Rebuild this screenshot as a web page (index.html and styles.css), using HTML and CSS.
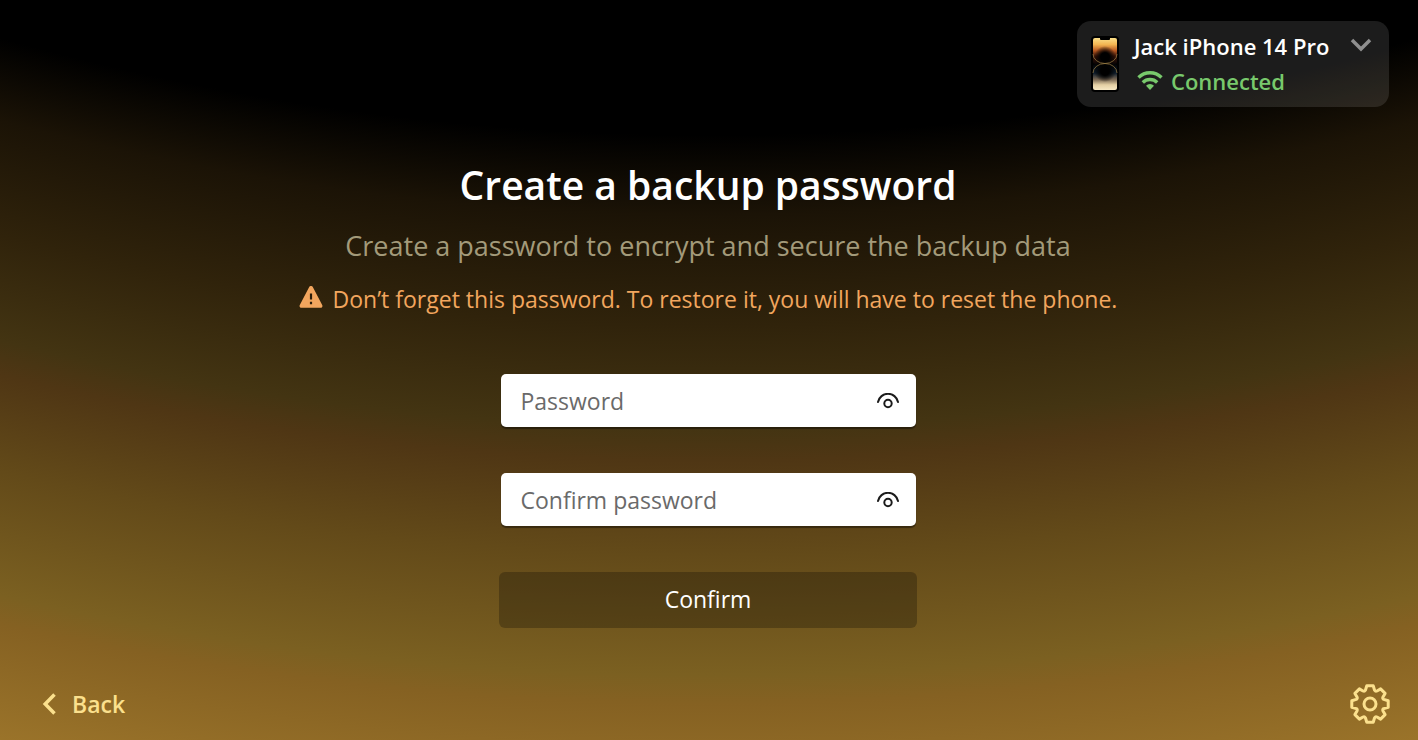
FILE: index.html
```html
<!DOCTYPE html>
<html lang="en">
<head>
  <meta charset="UTF-8" />
  <meta name="viewport" content="width=device-width, initial-scale=1.0" />
  <title>Create a backup password</title>
  <link rel="stylesheet" href="styles.css">
</head>
<body>
  <header>
    <button class="device" type="button">
      <svg class="phone" width="28" height="56" viewBox="0 0 28 56">
        <defs>
          <linearGradient id="wallTop" x1="0" y1="0" x2="0" y2="1">
            <stop offset="0" stop-color="#fbe08a" />
            <stop offset="0.25" stop-color="#f3b552" />
            <stop offset="0.48" stop-color="#b95a22" />
            <stop offset="0.7" stop-color="#3c1408" />
            <stop offset="1" stop-color="#0a0505" />
          </linearGradient>
          <linearGradient id="wallBottom" x1="0" y1="0" x2="0" y2="1">
            <stop offset="0" stop-color="#030303" />
            <stop offset="0.35" stop-color="#0d1c2b" />
            <stop offset="0.6" stop-color="#7c6a55" />
            <stop offset="0.8" stop-color="#e4cfa4" />
            <stop offset="1" stop-color="#f7e8c4" />
          </linearGradient>
          <radialGradient id="orb">
            <stop offset="0.4" stop-color="#000" />
            <stop offset="1" stop-color="#000" stop-opacity="0" />
          </radialGradient>
        </defs>
        <rect width="28" height="56" rx="4" fill="#000" />
        <rect x="2" y="2" width="24" height="26" rx="2" fill="url(#wallTop)" />
        <rect x="2" y="28" width="24" height="26" rx="2" fill="url(#wallBottom)" />
        <circle cx="14" cy="21" r="11" fill="url(#orb)" />
        <circle cx="14" cy="35" r="11" fill="url(#orb)" />
        <path d="M2 18a12 9.500 0 0 0 24 0M2 37a12 9.500 0 0 1 24 0" fill="none" stroke="#a08348" stroke-width="0.7" />
        <path d="M9 1h10v2a1 1 0 0 1-1 1h-8a1 1 0 0 1-1-1z" fill="#000" />
      </svg>
      <span class="device-info">
        <span class="device-name">Jack iPhone 14 Pro</span>
        <span class="device-status">
          <svg width="26" height="20" viewBox="0 0 26 20" fill="none" stroke="#78c96c" stroke-width="3.400">
            <path d="M1.500 7.500a16.300 16.300 0 0 1 23 0M5.800 12.500a10.200 10.200 0 0 1 14.400 0" />
            <path d="M13 20l-4-4.200a5.600 5.600 0 0 1 8 0z" fill="#78c96c" stroke="none" />
          </svg>
          Connected
        </span>
      </span>
      <svg class="chevron" width="22" height="14" viewBox="0 0 22 14" fill="none" stroke="#8f8f8f" stroke-width="3.500">
        <path d="M2 2l9 9 9-9" />
      </svg>
    </button>
  </header>

  <main>
    <h1>Create a backup password</h1>
    <p class="subtitle">Create a password to encrypt and secure the backup data</p>
    <p class="warning">
      <svg width="24" height="22" viewBox="0 0 24 22">
        <path d="M10.200 1.100a2 2 0 0 1 3.600 0l9.400 17.900a1.900 1.900 0 0 1-1.700 2.800h-19a1.900 1.900 0 0 1-1.700-2.800z" fill="#f2a65e" />
        <path d="M12 7.500v6M12 15.700v2.500" stroke="#2a1d0b" stroke-width="2.200" />
      </svg>
      Don’t forget this password. To restore it, you will have to reset the phone.
    </p>

    <form>
      <div class="field">
        <input type="password" placeholder="Password" aria-label="Password">
        <button class="eye" type="button" aria-label="Show password">
          <svg width="22" height="16" viewBox="0 0 22 16" fill="none" stroke="#1b1b1b" stroke-width="2">
            <path d="M1 9a10.200 10.200 0 0 1 20 0" stroke-linecap="round" />
            <circle cx="11" cy="10.500" r="3.700" />
          </svg>
        </button>
      </div>
      <div class="field">
        <input type="password" placeholder="Confirm password" aria-label="Confirm password">
        <button class="eye" type="button" aria-label="Show password">
          <svg width="22" height="16" viewBox="0 0 22 16" fill="none" stroke="#1b1b1b" stroke-width="2">
            <path d="M1 9a10.200 10.200 0 0 1 20 0" stroke-linecap="round" />
            <circle cx="11" cy="10.500" r="3.700" />
          </svg>
        </button>
      </div>
      <button class="confirm" type="submit">Confirm</button>
    </form>
  </main>

  <footer>
    <a class="back" href="#">
      <svg width="14" height="22" viewBox="0 0 14 22" fill="none" stroke="#fbe08d" stroke-width="3.500">
        <path d="M12.500 1.500l-9.300 9.500 9.300 9.500" />
      </svg>
      Back
    </a>
    <button class="settings" type="button" aria-label="Settings">
      <svg width="40" height="40" viewBox="-20 -20 40 40" fill="none" stroke="#fbe08d" stroke-width="3" stroke-linejoin="round">
        <path d="M-3.200-18.200H3.200L4.600-13.700Q5.500-12.300 7-13L10.600-15.100L15.100-10.600L13-7Q12.300-5.500 13.700-4.600L18.200-3.200V3.200L13.700 4.600Q12.300 5.500 13 7L15.100 10.600L10.600 15.100L7 13Q5.500 12.300 4.600 13.700L3.200 18.200H-3.200L-4.600 13.700Q-5.500 12.300-7 13L-10.600 15.100L-15.100 10.600L-13 7Q-12.300 5.500-13.700 4.600L-18.200 3.200V-3.200L-13.700-4.600Q-12.300-5.500-13-7L-15.100-10.600L-10.600-15.100L-7-13Q-5.500-12.300-4.600-13.700Z" />
        <circle r="6" />
      </svg>
    </button>
  </footer>
</body>
</html>
```
FILE: styles.css
```css
* {
  box-sizing: border-box;
}
body {
  font-family: "Segoe UI", "Open Sans", "Noto Sans", sans-serif;
  margin: 0;
  min-height: 100vh;
  display: flex;
  flex-direction: column;
  color: #fff;
  background: #000 radial-gradient(circle 3320px at 50% -2500px, #000 2635px, #1b1306 2715px, #30230b 2826px, #433412 2927px, #4f3614 2961px, #634a19 3055px, #7b6021 3175px, #856122 3204px, #9b742a 3320px);
}
button {
  font-family: inherit;
  border: none;
  padding: 0;
  cursor: pointer;
}
svg {
  display: block;
  flex-shrink: 0;
}
header {
  display: flex;
  justify-content: flex-end;
  padding: 21px 29px 0;
}
.device {
  display: flex;
  align-items: flex-start;
  width: 312px;
  height: 86px;
  padding: 8px 17px 0 14px;
  border-radius: 14px;
  background: rgba(255, 255, 255, 0.11);
  color: #fff;
  text-align: left;
}
.phone {
  margin-top: 7px;
}
.device-info {
  flex: 1;
  margin-left: 15px;
  font-size: 22px;
  font-weight: 600;
  line-height: 35px;
  white-space: nowrap;
}
.device-name {
  display: block;
}
.device-status {
  display: flex;
  align-items: center;
  gap: 8px;
  padding-left: 3px;
  color: #78c96c;
}
.device-status svg {
  margin-bottom: 4px;
}
.chevron {
  margin-top: 9px;
}
main {
  flex: 1;
  display: flex;
  flex-direction: column;
  align-items: center;
  padding: 50px 2px 0 0;
}
h1 {
  margin: 0;
  font-size: 39px;
  font-weight: 600;
  line-height: 56px;
}
p {
  margin: 0;
}
.subtitle {
  margin-top: 13px;
  font-size: 27px;
  line-height: 40px;
  color: #a39a7a;
}
.warning {
  display: flex;
  align-items: center;
  gap: 10px;
  margin-top: 15px;
  font-size: 23px;
  line-height: 36px;
  color: #f2a65e;
}
.warning svg {
  margin-bottom: 4px;
}
form {
  display: flex;
  flex-direction: column;
  align-items: center;
  margin-top: 57px;
}
.field {
  display: flex;
  align-items: center;
  width: 415px;
  height: 53px;
  margin-bottom: 46px;
  padding: 0 17px 0 20px;
  border-radius: 5px;
  background: #fff;
  box-shadow: 0 2px 1px rgba(0, 0, 0, 0.4);
}
.field input {
  flex: 1;
  min-width: 0;
  padding: 0;
  border: none;
  outline: none;
  background: none;
  font-family: inherit;
  font-size: 23px;
}
.field input::placeholder {
  color: #6a6a6a;
}
.eye {
  background: none;
}
.confirm {
  width: 418px;
  height: 56px;
  padding-bottom: 3px;
  border-radius: 6px;
  background: rgba(0, 0, 0, 0.25);
  color: #fff;
  font-size: 23px;
}
footer {
  display: flex;
  justify-content: space-between;
  align-items: center;
  padding: 0 28px 16px 42px;
}
.back {
  display: flex;
  align-items: center;
  gap: 16px;
  color: #fbe08d;
  font-size: 23px;
  font-weight: 600;
  text-decoration: none;
}
.settings {
  background: none;
}
```
